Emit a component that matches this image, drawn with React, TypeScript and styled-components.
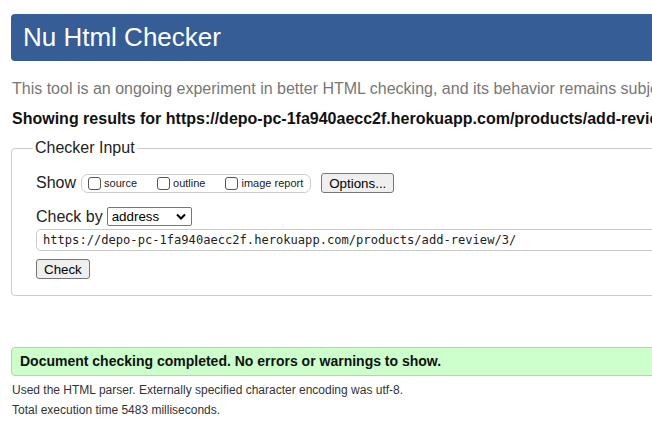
import React from 'react'
import styled, { createGlobalStyle } from 'styled-components'

const GlobalStyle = createGlobalStyle`
  html, body {
    margin: 0;
    padding: 0;
    overflow: hidden;
    background: #fff;
  }
  body {
    font-family: 'Liberation Sans', Arial, sans-serif;
    color: #222;
  }
`

const Page = styled.div`
  width: 1400px;
  padding: 14px 0 0 11px;
`

const Header = styled.h1`
  margin: 0;
  height: 47px;
  line-height: 47px;
  padding-left: 12px;
  background: #365d95;
  color: #fff;
  font-size: 26px;
  font-weight: normal;
  border-radius: 4px;
`

const Intro = styled.p`
  margin: 18px 0 0 1px;
  font-size: 16px;
  line-height: 20px;
  color: #777;
  white-space: nowrap;
`

const ResultsFor = styled.p`
  margin: 10px 0 0 1px;
  font-size: 16px;
  line-height: 20px;
  font-weight: bold;
  color: #111;
  white-space: nowrap;
`

const Fieldset = styled.fieldset`
  margin: 10px 0 0 0;
  padding: 16px 24px 16px 24px;
  border: 1px solid #ccc;
  border-radius: 4px;
  min-width: 0;
`

const Legend = styled.legend`
  margin-left: -3px;
  padding: 0 2px;
  font-size: 16px;
  line-height: 18px;
  color: #222;
`

const Row = styled.div<{ $top?: number; $h: number }>`
  display: flex;
  align-items: center;
  height: ${p => p.$h}px;
  margin-top: ${p => p.$top ?? 0}px;
  font-size: 16px;
`

const RowLabel = styled.span<{ $gap?: number }>`
  margin-right: ${p => p.$gap ?? 5}px;
  line-height: 18px;
`

const ChoiceGroup = styled.span`
  display: inline-flex;
  align-items: center;
  height: 17px;
  padding: 0 7px 0 6px;
  border: 1px solid #ccc;
  border-radius: 7px;
  margin-right: 10px;
`

const Choice = styled.label<{ $last?: boolean }>`
  display: inline-flex;
  align-items: center;
  margin-right: ${p => (p.$last ? 0 : 20)}px;
  font-size: 11px;
  color: #222;
`

const Box = styled.input`
  appearance: none;
  width: 13px;
  height: 13px;
  margin: 0 3px 0 0;
  border: 1px solid #555;
  border-radius: 3px;
  background: #fff;
`

const Button = styled.button`
  height: 20px;
  padding: 0 7px;
  font-family: 'Liberation Sans', Arial, sans-serif;
  font-size: 13.33px;
  color: #000;
  background: #efefef;
  border: 1px solid #767676;
  border-radius: 3px;
`

const SelectWrap = styled.span`
  position: relative;
  display: inline-flex;
`

const Select = styled.select`
  appearance: none;
  width: 85px;
  height: 19px;
  padding: 0 0 0 4px;
  font-family: 'Liberation Sans', Arial, sans-serif;
  font-size: 13.33px;
  color: #000;
  background: #fff;
  border: 1px solid #767676;
  border-radius: 2px;
`

const Chevron = styled.svg`
  position: absolute;
  right: 6px;
  top: 6px;
  pointer-events: none;
`

const UrlInput = styled.input`
  box-sizing: border-box;
  width: 1300px;
  height: 22px;
  padding: 0 6px;
  font-family: 'DejaVu Sans Mono', 'Liberation Mono', monospace;
  font-size: 12.1px;
  color: #222;
  border: 1px solid #ccc;
  border-radius: 5px;
  outline: none;
`

const Success = styled.div`
  margin-top: 51px;
  height: 27px;
  line-height: 27px;
  padding-left: 8px;
  background: #ccffcc;
  border: 1px solid #c6c6c6;
  border-radius: 4px;
  font-size: 14px;
  font-weight: bold;
  color: #111;
  white-space: nowrap;
`

const Detail = styled.p<{ $top?: number }>`
  margin: ${p => p.$top ?? 0}px 0 0 1px;
  font-size: 12px;
  line-height: 19.5px;
  color: #333;
`

export default function App() {
  return (
    <>
      <GlobalStyle />
      <Page>
        <Header>Nu Html Checker</Header>
        <Intro>
          This tool is an ongoing experiment in better HTML checking, and its behavior remains subject to change
        </Intro>
        <ResultsFor>
          Showing results for https://depo-pc-1fa940aecc2f.herokuapp.com/products/add-review/3/
        </ResultsFor>

        <Fieldset>
          <Legend>Checker Input</Legend>
          <Row $h={20}>
            <RowLabel>Show</RowLabel>
            <ChoiceGroup>
              <Choice>
                <Box type="checkbox" />
                source
              </Choice>
              <Choice>
                <Box type="checkbox" />
                outline
              </Choice>
              <Choice $last>
                <Box type="checkbox" />
                image report
              </Choice>
            </ChoiceGroup>
            <Button type="button">Options...</Button>
          </Row>
          <Row $h={19} $top={14}>
            <RowLabel $gap={4}>Check by</RowLabel>
            <SelectWrap>
              <Select defaultValue="address">
                <option value="address">address</option>
                <option value="upload">file upload</option>
                <option value="text">text input</option>
              </Select>
              <Chevron width="10" height="7" viewBox="0 0 10 7">
                <path d="M1 1.5 L5 5.5 L9 1.5" fill="none" stroke="#000" strokeWidth="2" />
              </Chevron>
            </SelectWrap>
          </Row>
          <Row $h={22} $top={3}>
            <UrlInput
              type="url"
              defaultValue="https://depo-pc-1fa940aecc2f.herokuapp.com/products/add-review/3/"
            />
          </Row>
          <Row $h={20} $top={8}>
            <Button type="submit">Check</Button>
          </Row>
        </Fieldset>

        <Success>Document checking completed. No errors or warnings to show.</Success>
        <Detail $top={5}>Used the HTML parser. Externally specified character encoding was utf-8.</Detail>
        <Detail>Total execution time 5483 milliseconds.</Detail>
      </Page>
    </>
  )
}
